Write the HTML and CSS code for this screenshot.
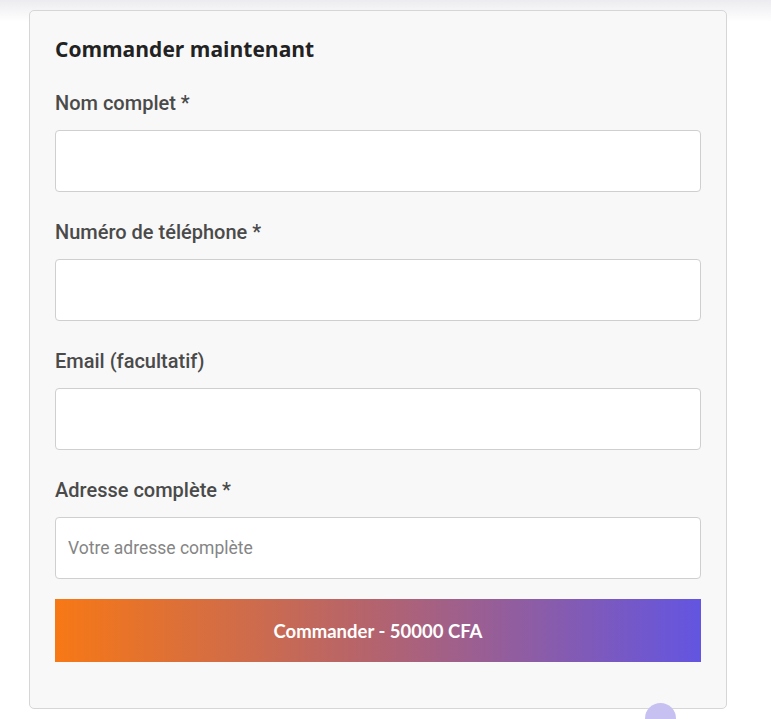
FILE: index.html
```html
<!DOCTYPE html>
<html lang="fr">
<head>
    <meta charset="UTF-8">
    <meta name="viewport" content="width=device-width, initial-scale=1.0">
    <title>Commander maintenant</title>
    <link rel="stylesheet" href="styles.css">
</head>
<body>
    <div class="top-shade"></div>
    <div class="page">
        <form class="order-card" onsubmit="return false;">
            <h2>Commander maintenant</h2>

            <div class="field">
                <label for="name">Nom complet *</label>
                <input type="text" id="name">
            </div>

            <div class="field">
                <label for="phone">Numéro de téléphone *</label>
                <input type="tel" id="phone">
            </div>

            <div class="field">
                <label for="email">Email (facultatif)</label>
                <input type="email" id="email">
            </div>

            <div class="field last">
                <label for="address">Adresse complète *</label>
                <input type="text" id="address" placeholder="Votre adresse complète">
            </div>

            <button type="submit" class="order-btn">Commander - 50000 CFA</button>
        </form>
    </div>
    <div class="chat-bubble"></div>
</body>
</html>
```

FILE: styles.css
```css
body {
    margin: 0;
    background: #ffffff;
    font-family: Roboto, "Noto Sans", Arial, sans-serif;
    overflow: hidden;
}
.top-shade {
    position: absolute;
    top: 0;
    left: 0;
    right: 0;
    height: 22px;
    background: linear-gradient(to bottom, #ececf0, rgba(255, 255, 255, 0));
}
.page {
    padding: 10px 0 0 29px;
}
.order-card {
    position: relative;
    width: 698px;
    box-sizing: border-box;
    background: #f8f8f8;
    border: 1px solid #d6d6d6;
    border-radius: 5px;
    padding: 23px 25px 46px 25px;
}
.order-card h2 {
    margin: 0 0 27px 0;
    font-family: "Open Sans", Lato, sans-serif;
    font-size: 21px;
    font-weight: 700;
    line-height: 30px;
    color: #222222;
}
.field {
    margin-bottom: 28px;
}
.field.last {
    margin-bottom: 20px;
}
.field label {
    display: block;
    font-size: 20px;
    font-weight: 500;
    line-height: 24px;
    color: #4a4a4a;
    margin-bottom: 15px;
}
.field input {
    display: block;
    width: 100%;
    height: 62px;
    box-sizing: border-box;
    border: 1px solid #cfcfcf;
    border-radius: 4px;
    background: #ffffff;
    padding: 0 12px;
    font-family: Roboto, sans-serif;
    font-size: 17.5px;
    color: #333333;
    outline: none;
}
.field input::placeholder {
    color: #858585;
}
.order-btn {
    display: block;
    width: 100%;
    height: 63px;
    border: none;
    border-radius: 0;
    background: linear-gradient(to right, #f77815, #b3636f 50%, #6355e1);
    color: #ffffff;
    font-family: Lato, "Open Sans", sans-serif;
    font-size: 18.5px;
    font-weight: 700;
    cursor: pointer;
}
.chat-bubble {
    position: absolute;
    left: 645px;
    top: 703px;
    width: 31px;
    height: 31px;
    border-radius: 50%;
    background: #c6c1f1;
}
```
